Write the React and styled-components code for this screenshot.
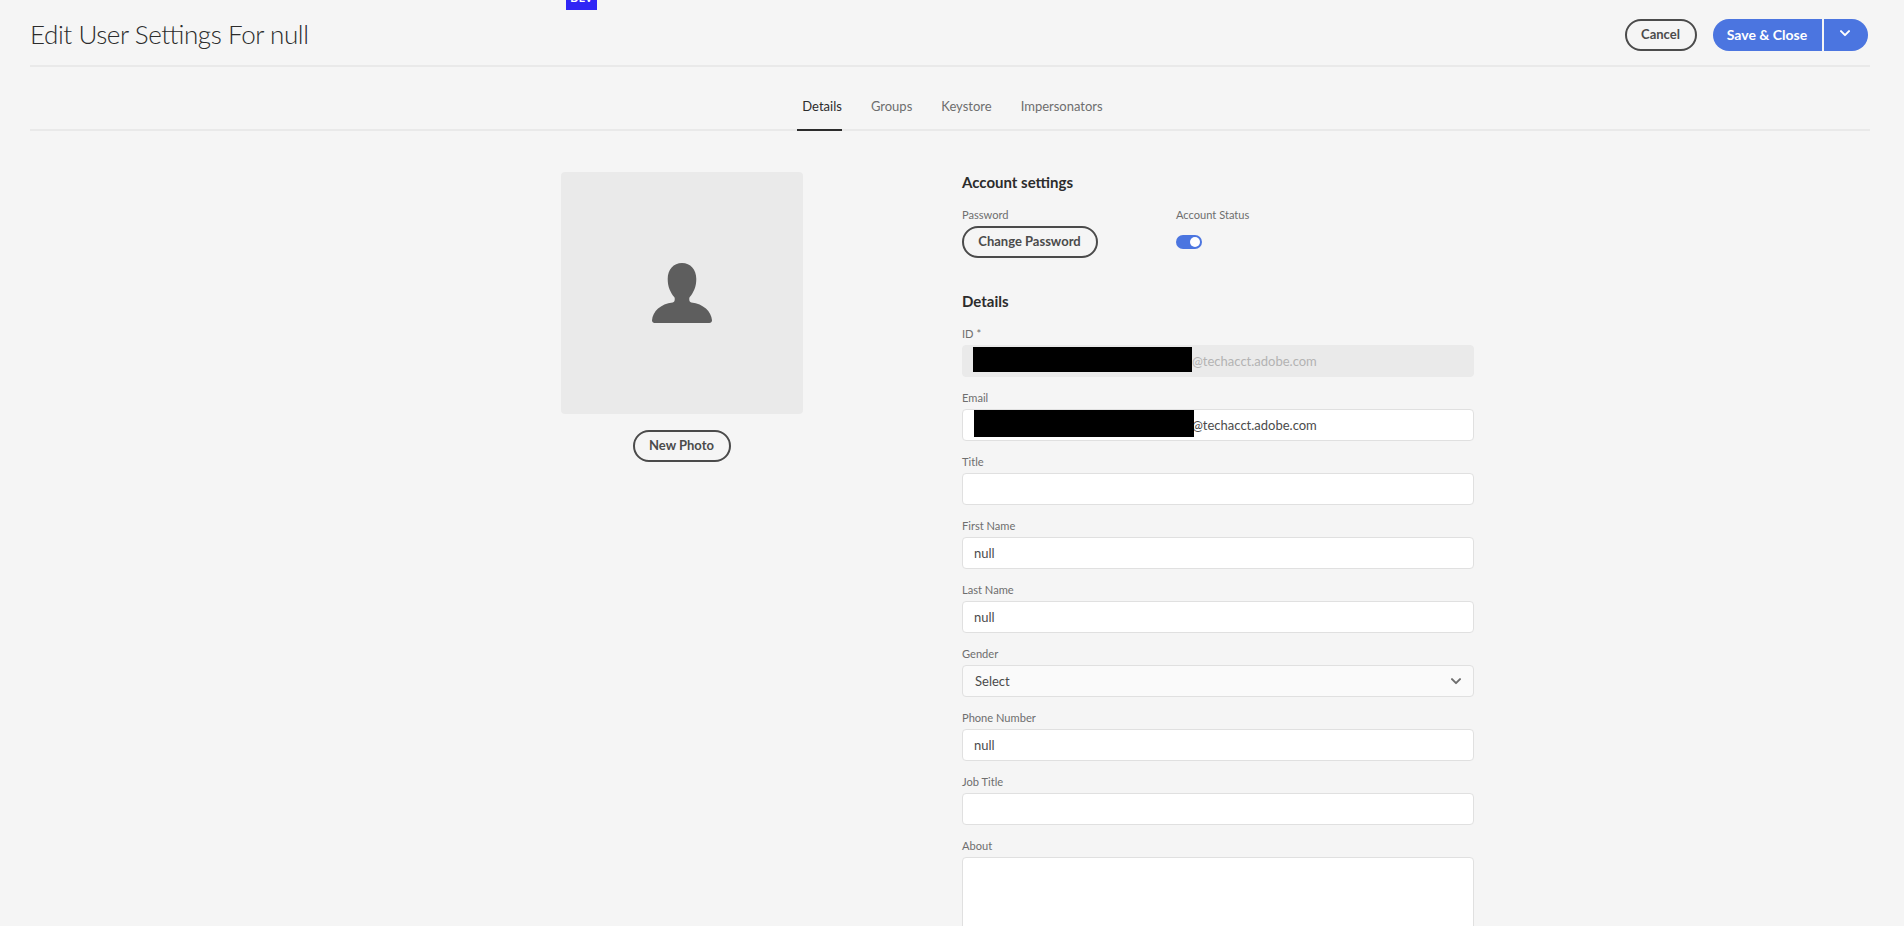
import React from "react";
import styled, { createGlobalStyle } from "styled-components";

const GlobalStyle = createGlobalStyle`
  *, *::before, *::after { box-sizing: border-box; }
  html, body { margin: 0; height: 100%; overflow: hidden; }
  body { background: #f5f5f5; color: #2c2c2c; font-family: Lato, "Open Sans", sans-serif; font-size: 13px; }
`;

const Page = styled.div`
  position: relative;
  height: 926px;
  padding: 0 34px 0 30px;
  overflow: hidden;
`;

const EnvBadge = styled.div`
  position: absolute;
  top: -10px;
  left: 566px;
  width: 31px;
  height: 20px;
  background: #3026f5;
  color: #fff;
  font: 700 11px/16px Lato, sans-serif;
  text-align: center;
`;

const Header = styled.header`
  display: flex;
  align-items: center;
  justify-content: space-between;
  height: 67px;
  padding: 3px 2px 0 0;
  border-bottom: 2px solid #e9e9e9;
`;

const PageTitle = styled.h1`
  margin: 0;
  font-size: 26px;
  font-weight: 300;
  line-height: 32px;
  letter-spacing: -0.42px;
  font-feature-settings: "liga" 1;
`;

const Actions = styled.div`
  display: flex;
  gap: 16px;
  padding-top: 1px;
`;

const OutlineButton = styled.button`
  width: ${(p) => p.$width}px;
  height: 32px;
  padding: 0 1px 2px 0;
  border: 2px solid #4b4b4b;
  border-radius: 16px;
  background: transparent;
  color: #4b4b4b;
  font: 700 13px/26px Lato, sans-serif;
  white-space: nowrap;
`;

const SplitButton = styled.div`
  display: flex;
  gap: 2px;
`;

const PrimaryButton = styled.button`
  display: flex;
  align-items: center;
  justify-content: center;
  width: ${(p) => p.$width}px;
  height: 32px;
  padding: ${(p) => (p.$side === "left" ? "0 1px 0 0" : "0 2px 2px 0")};
  border: 0;
  border-radius: ${(p) => (p.$side === "left" ? "16px 0 0 16px" : "0 16px 16px 0")};
  background: #4b75e0;
  color: #fff;
  font: 700 14px/32px Lato, sans-serif;
`;

const Tabs = styled.nav`
  display: flex;
  justify-content: center;
  gap: 24px;
  height: 64px;
  border-bottom: 2px solid #e9e9e9;
`;

const Tab = styled.a`
  height: 64px;
  padding: 24px 0 0 5px;
  border-bottom: 2px solid ${(p) => (p.$active ? "#2c2c2c" : "transparent")};
  color: ${(p) => (p.$active ? "#2c2c2c" : "#6e6e6e")};
  line-height: 31px;
`;

const Content = styled.main`
  display: flex;
  align-items: flex-start;
  gap: 159px;
  padding: 41px 0 0 531px;
`;

const PhotoColumn = styled.section`
  display: flex;
  flex-direction: column;
  align-items: center;
  gap: 16px;
  width: 242px;
`;

const Photo = styled.div`
  display: flex;
  align-items: center;
  justify-content: center;
  width: 242px;
  height: 242px;
  border-radius: 4px;
  background: #eaeaea;
`;

const FormColumn = styled.section`
  width: 512px;
`;

const SectionTitle = styled.h2`
  height: 22px;
  margin: ${(p) => p.$top}px 0 0;
  font-size: 15px;
  font-weight: 700;
  line-height: 20px;
`;

const Label = styled.div`
  height: 24px;
  color: #6e6e6e;
  font-size: 11.1px;
  line-height: 25px;
`;

const AccountRow = styled.div`
  display: grid;
  grid-template-columns: 214px 1fr;
  padding-top: 8px;
`;

const Toggle = styled.div`
  display: flex;
  justify-content: flex-end;
  width: 26px;
  height: 14px;
  margin-top: 9px;
  padding: 2px;
  border-radius: 7px;
  background: #4b75e0;
`;

const Knob = styled.span`
  width: 10px;
  height: 10px;
  border-radius: 50%;
  background: #fff;
`;

const Fields = styled.div`
  display: grid;
  gap: 8px;
  padding-top: 8px;
`;

const Input = styled.div`
  display: flex;
  align-items: center;
  justify-content: ${(p) => (p.$picker ? "space-between" : "flex-start")};
  height: ${(p) => p.$height || 32}px;
  padding: 0 12px 0 ${(p) => p.$indent || 11}px;
  border: 1px solid ${(p) => (p.$disabled ? "#eaeaea" : "#e0e0e0")};
  border-radius: 4px;
  background: ${(p) => (p.$disabled ? "#eaeaea" : p.$picker ? "#fafafa" : "#fff")};
  color: ${(p) => (p.$disabled ? "#b3b3b3" : "#4b4b4b")};
  line-height: 20px;
`;

const Redaction = styled.span`
  flex: none;
  z-index: 1;
  width: ${(p) => p.$width}px;
  height: ${(p) => p.$height}px;
  margin: 0 ${(p) => p.$overlap || 0}px ${(p) => p.$lift}px 0;
  background: #000;
`;

const Chevron = ({ color }) => (
  <svg width="10" height="7" viewBox="0 0 10 7" fill="none" stroke={color} strokeWidth="2" strokeLinecap="round" strokeLinejoin="round">
    <path d="M1 1.1 5 5.1 9 1.1" />
  </svg>
);

const UserIcon = () => (
  <svg width="60" height="60" viewBox="0 0 60 60" fill="#5e5e5e">
    <path d="M30 0C38.5 0 44.3 6.4 44.3 16C44.3 23.8 41.7 29.3 37.6 34.3C37 35.2 37.2 37.2 37.8 38.6C38 39.1 38.5 39.4 39.3 39.5C51.5 40.8 59.2 48.5 60 57.2C60.1 58.8 59 60 57.4 60H2.6C1 60-.1 58.8 0 57.2C.8 48.5 8.5 40.8 20.7 39.5C21.5 39.4 22 39.1 22.2 38.6C22.8 37.2 23 35.2 22.4 34.3C18.3 29.3 15.7 23.8 15.7 16C15.7 6.4 21.5 0 30 0Z" />
  </svg>
);

const domain = "@techacct.adobe.com";

const textFields = [
  { label: "Title", value: "" },
  { label: "First Name", value: "null" },
  { label: "Last Name", value: "null" },
  { label: "Gender", value: "Select", picker: true },
  { label: "Phone Number", value: "null" },
  { label: "Job Title", value: "" },
  { label: "About", value: "", height: 120 },
];

const tabs = ["Details", "Groups", "Keystore", "Impersonators"];

export default function App() {
  return (
    <Page>
      <GlobalStyle />
      <EnvBadge>DEV</EnvBadge>
      <Header>
        <PageTitle>Edit User Settings For null</PageTitle>
        <Actions>
          <OutlineButton $width={72}>Cancel</OutlineButton>
          <SplitButton>
            <PrimaryButton $side="left" $width={109}>Save &amp; Close</PrimaryButton>
            <PrimaryButton $side="right" $width={44} aria-label="More save options">
              <Chevron color="#fff" />
            </PrimaryButton>
          </SplitButton>
        </Actions>
      </Header>
      <Tabs>
        {tabs.map((name, i) => (
          <Tab key={name} $active={i === 0}>{name}</Tab>
        ))}
      </Tabs>
      <Content>
        <PhotoColumn>
          <Photo><UserIcon /></Photo>
          <OutlineButton $width={98}>New Photo</OutlineButton>
        </PhotoColumn>
        <FormColumn>
          <SectionTitle $top={0}>Account settings</SectionTitle>
          <AccountRow>
            <div>
              <Label>Password</Label>
              <OutlineButton $width={136}>Change Password</OutlineButton>
            </div>
            <div>
              <Label>Account Status</Label>
              <Toggle><Knob /></Toggle>
            </div>
          </AccountRow>
          <SectionTitle $top={33}>Details</SectionTitle>
          <Fields>
            <div>
              <Label>ID *</Label>
              <Input $disabled $indent={10}>
                <Redaction $width={219} $height={25} $lift={3} />
                {domain}
              </Input>
            </div>
            <div>
              <Label>Email</Label>
              <Input>
                <Redaction $width={220} $height={27} $lift={3} $overlap={-2} />
                {domain}
              </Input>
            </div>
            {textFields.map((f) => (
              <div key={f.label}>
                <Label>{f.label}</Label>
                <Input $picker={f.picker} $height={f.height} $indent={f.picker ? 12 : 11}>
                  {f.value}
                  {f.picker && <Chevron color="#6e6e6e" />}
                </Input>
              </div>
            ))}
          </Fields>
        </FormColumn>
      </Content>
    </Page>
  );
}
